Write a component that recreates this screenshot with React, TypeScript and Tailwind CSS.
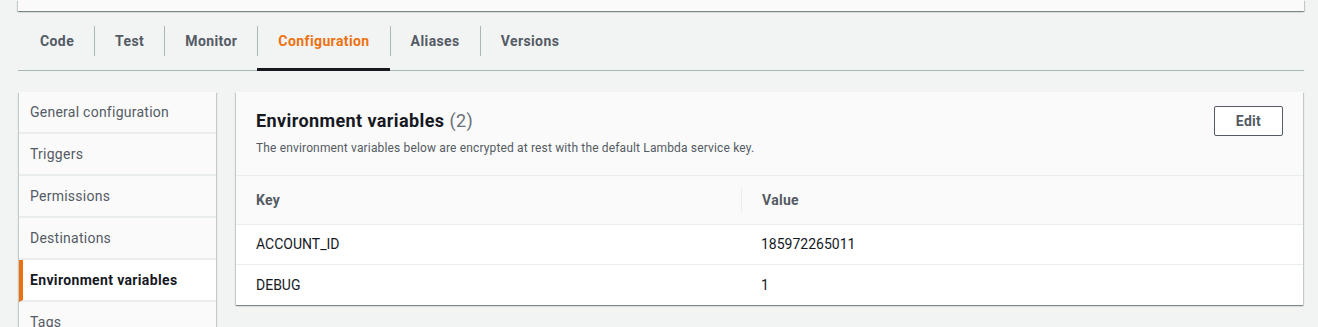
import React from "react";

const tabs = ["Code", "Test", "Monitor", "Configuration", "Aliases", "Versions"];
const side = [
  "General configuration",
  "Triggers",
  "Permissions",
  "Destinations",
  "Environment variables",
  "Tags",
];

const cardShadow =
  "shadow-[0_1px_1px_0_rgba(0,28,36,0.3),1px_1px_1px_0_rgba(0,28,36,0.15),-1px_1px_1px_0_rgba(0,28,36,0.15)]";

export default function App() {
  return (
    <div
      className="w-[1318px] h-[327px] overflow-hidden bg-[#f2f3f3] pl-[18px] pr-[14px]"
      style={{ fontFamily: "Roboto, 'Liberation Sans', sans-serif" }}
    >
      <div className={`h-[11px] bg-[#fafafa] ${cardShadow}`} />

      <div className="mt-[15px] flex border-b border-[#aab7b8] h-[45px]">
        {tabs.map((t, i) => {
          const active = t === "Configuration";
          return (
            <div key={t} className="flex flex-col">
              <div
                className={`h-[30px] flex items-center px-[20px] text-[14px] font-bold tracking-[0.4px] ${
                  i > 0 ? "border-l border-[#aab7b8]" : "pl-[22px]"
                } ${active ? "text-[#ec7211]" : "text-[#545b64]"}`}
              >
                {t}
              </div>
              <div className="flex-1" />
              <div className={`h-[3px] -mb-px ${active ? "bg-[#16191f]" : ""}`} />
            </div>
          );
        })}
      </div>

      <div className="mt-[21px] flex gap-[20px]">
        <div className={`w-[197px] ml-px shrink-0 ${cardShadow}`}>
          {side.map((s) => {
            const active = s === "Environment variables";
            return (
              <div
                key={s}
                className={`h-[42px] flex items-center border-b-2 border-[#eaeded] text-[14px] ${
                  active
                    ? "bg-white border-l-4 border-l-[#ec7211] pl-[7px] font-bold text-[#16191f] tracking-[0.35px]"
                    : "bg-[#fafafa] pl-[11px] text-[#545b64] tracking-[0.25px]"
                }`}
              >
                {s}
              </div>
            );
          })}
        </div>

        <div className={`flex-1 self-start mr-px bg-white ${cardShadow}`}>
          <div className="bg-[#fafafa] flex justify-between px-5 border-b border-[#eaeded] h-[84px]">
            <div className="pt-[18px]">
              <div className="text-[18px] leading-[22px] font-bold text-[#16191f] tracking-[0.4px]">
                Environment variables{" "}
                <span className="font-normal text-[#687078]">(2)</span>
              </div>
              <div className="mt-2 text-[12px] leading-4 text-[#545b64] tracking-[0.15px]">
                The environment variables below are encrypted at rest with the default Lambda service key.
              </div>
            </div>
            <div className="pt-[14px]">
              <button className="w-[69px] h-[30px] border border-[#545b64] rounded-[2px] bg-white text-[14px] font-bold text-[#545b64] tracking-[0.3px]">
                Edit
              </button>
            </div>
          </div>

          <div className="grid grid-cols-[505px_1fr]">
            <div className="h-[49px] bg-[#fafafa] border-b border-[#eaeded] flex items-center pl-5 text-[14px] font-bold text-[#545b64] tracking-[0.3px]">
              Key
            </div>
            <div className="h-[49px] bg-[#fafafa] border-b border-[#eaeded] flex items-center text-[14px] font-bold text-[#545b64] tracking-[0.3px]">
              <div className="h-6 border-l border-[#eaeded] mr-5" />
              Value
            </div>
            {[
              ["ACCOUNT_ID", "185972265011"],
              ["DEBUG", "1"],
            ].map(([k, v], i) => (
              <React.Fragment key={k}>
                <div
                  className={`h-10 flex items-center pl-5 text-[14px] text-[#16191f] ${
                    i === 0 ? "border-b border-[#eaeded]" : ""
                  }`}
                >
                  {k}
                </div>
                <div
                  className={`h-10 flex items-center pl-5 text-[14px] text-[#16191f] ${
                    i === 0 ? "border-b border-[#eaeded]" : ""
                  }`}
                >
                  {v}
                </div>
              </React.Fragment>
            ))}
          </div>
        </div>
      </div>
    </div>
  );
}
